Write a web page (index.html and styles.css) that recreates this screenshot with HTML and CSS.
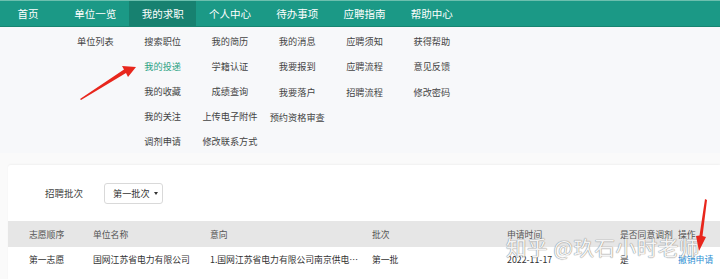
FILE: index.html
```html
<!DOCTYPE html>
<html lang="zh-CN">
<head>
<meta charset="utf-8">
<title>我的投递</title>
<link rel="stylesheet" href="styles.css">
</head>
<body>
<header class="topbar">
  <nav class="nav">
    <div class="nav-col">
      <div class="nav-item">首页</div>
    </div>
    <div class="nav-col">
      <div class="nav-item">单位一览</div>
    </div>
    <div class="nav-col">
      <div class="nav-item active">我的求职</div>
    </div>
    <div class="nav-col">
      <div class="nav-item">个人中心</div>
    </div>
    <div class="nav-col">
      <div class="nav-item">待办事项</div>
    </div>
    <div class="nav-col">
      <div class="nav-item">应聘指南</div>
    </div>
    <div class="nav-col">
      <div class="nav-item">帮助中心</div>
    </div>
  </nav>
</header>
<section class="dropdown">
  <div class="sub-col"></div>
  <div class="sub-col">
    <a class="sub-link">单位列表</a>
  </div>
  <div class="sub-col">
    <a class="sub-link">搜索职位</a>
    <a class="sub-link current">我的投递</a>
    <a class="sub-link">我的收藏</a>
    <a class="sub-link">我的关注</a>
    <a class="sub-link">调剂申请</a>
  </div>
  <div class="sub-col">
    <a class="sub-link">我的简历</a>
    <a class="sub-link">学籍认证</a>
    <a class="sub-link">成绩查询</a>
    <a class="sub-link">上传电子附件</a>
    <a class="sub-link">修改联系方式</a>
  </div>
  <div class="sub-col">
    <a class="sub-link">我的消息</a>
    <a class="sub-link">我要报到</a>
    <a class="sub-link">我要落户</a>
    <a class="sub-link">预约资格审查</a>
  </div>
  <div class="sub-col">
    <a class="sub-link">应聘须知</a>
    <a class="sub-link">应聘流程</a>
    <a class="sub-link">招聘流程</a>
  </div>
  <div class="sub-col">
    <a class="sub-link">获得帮助</a>
    <a class="sub-link">意见反馈</a>
    <a class="sub-link">修改密码</a>
  </div>
</section>
<main class="page">
  <div class="card">
    <div class="filter">
      <span class="filter-label">招聘批次</span>
      <button class="select">第一批次 <span class="caret"></span></button>
    </div>
    <div class="table">
      <div class="row head">
        <div>志愿顺序</div>
        <div>单位名称</div>
        <div>意向</div>
        <div>批次</div>
        <div>申请时间</div>
        <div>是否同意调剂</div>
        <div>操作</div>
      </div>
      <div class="row body">
        <div>第一志愿</div>
        <div>国网江苏省电力有限公司</div>
        <div class="ellipsis">1.国网江苏省电力有限公司南京供电分公司,2.国网江苏省电力有限公司</div>
        <div>第一批</div>
        <div>2022-11-17</div>
        <div>是</div>
        <div><a class="action">撤销申请</a></div>
      </div>
    </div>
  </div>
</main>
<div class="watermark">知乎 @玖石小时老师</div>
<svg class="arrows" width="720" height="279" viewBox="0 0 720 279">
  <polygon points="80,99 124,69.5 122,66 136,67 128,77 126,73 81,100" fill="#e8261c"/>
  <polygon points="705,199 707,200 702.5,236 706,237 699,251 696,236 699.5,235.5" fill="#e8261c"/>
</svg>
</body>
</html>
```
FILE: styles.css
```css
* { box-sizing: border-box; }
html, body {
  margin: 0;
  padding: 0;
}
body {
  width: 720px;
  height: 279px;
  overflow: hidden;
  background: #fafafa;
  font-family: "Noto Sans CJK SC", "Microsoft YaHei", sans-serif;
  color: #333;
  position: relative;
}
.topbar {
  height: 27px;
  background: #1b9986;
  border-top: 1px solid #6cbfae;
  border-bottom: 1px solid #178571;
}
.nav {
  display: flex;
  margin-left: -5.6px;
  height: 100%;
}
.nav-col {
  width: 67.3px;
  flex: none;
}
.nav-item {
  height: 100%;
  display: flex;
  align-items: center;
  justify-content: center;
  color: #fff;
  font-size: 10.5px;
}
.nav-item.active {
  background: #178170;
}
.dropdown {
  display: flex;
  margin-left: -5.6px;
  height: 126px;
  padding-top: 1.5px;
  background: #f7f8fa;
}
.sub-col {
  width: 67.3px;
  flex: none;
  display: flex;
  flex-direction: column;
  align-items: center;
}
.sub-link {
  height: 25.3px;
  display: flex;
  align-items: center;
  font-size: 9.2px;
  color: #444;
  white-space: nowrap;
}
.sub-link.current {
  color: #2aa283;
}
.page {
  padding: 12px 0 0 8px;
}
.card {
  background: #fff;
  box-shadow: 0 -1px 2px rgba(0,0,0,0.04);
  height: 120px;
  border-top-left-radius: 3px;
}
.filter {
  display: flex;
  align-items: center;
  height: 56px;
  padding: 0 0 0 37px;
}
.filter-label {
  font-size: 9.5px;
  color: #444;
  width: 59px;
}
.select {
  width: 59px;
  height: 21px;
  border: 1px solid #d9d9d9;
  border-radius: 3px;
  background: #fff;
  font-family: inherit;
  font-size: 9.2px;
  color: #333;
  padding: 0 0 0 8px;
  text-align: left;
  display: flex;
  align-items: center;
  gap: 3px;
}
.caret {
  display: inline-block;
  width: 0;
  height: 0;
  border-left: 2.5px solid transparent;
  border-right: 2.5px solid transparent;
  border-top: 3px solid #333;
  margin-left: 1px;
}
.table {
  font-size: 8.8px;
}
.row {
  display: grid;
  grid-template-columns: 64px 117px 162px 135px 113px 58px 1fr;
  column-gap: 0;
  padding-left: 21px;
  align-items: center;
}
.row > div {
  white-space: nowrap;
  overflow: hidden;
}
.row .ellipsis {
  text-overflow: ellipsis;
  margin-right: 12px;
}
.row.head {
  height: 26px;
  background: #e6e6e6;
  color: #555;
}
.row.body {
  height: 25px;
  color: #333;
}
.action {
  color: #2f8fd3;
}
.watermark {
  position: absolute;
  left: 506px;
  top: 237px;
  font-size: 20.5px;
  line-height: 1;
  color: rgba(255,255,255,0.92);
  letter-spacing: 0.6px;
  text-shadow: 0 0 1px #888, 0 0 1px #888;
  white-space: nowrap;
}
.arrows {
  position: absolute;
  left: 0;
  top: 0;
  pointer-events: none;
}
```
